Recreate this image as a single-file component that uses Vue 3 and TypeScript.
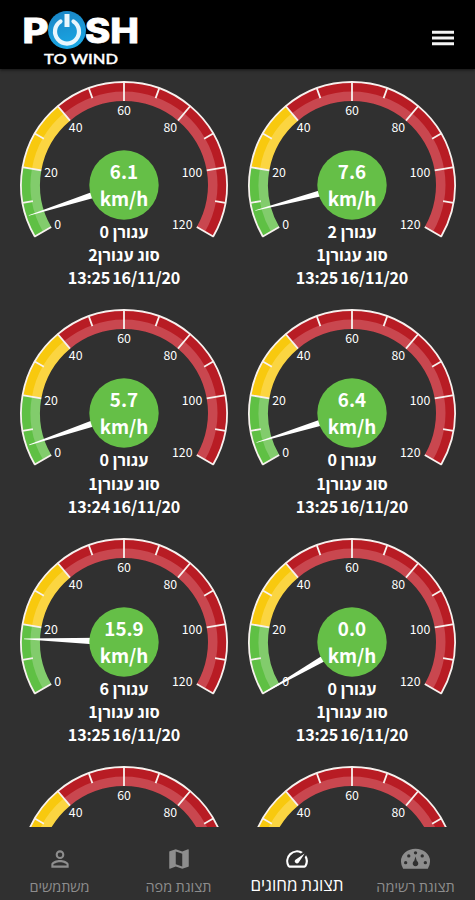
<script setup lang="ts">
interface Reading {
  value: number
  name: string
  kind: string
  time: string
}

const readings: Reading[] = [
  { value: 6.1, name: 'עגורן 0', kind: 'סוג עגורן2', time: '13:25 16/11/20' },
  { value: 7.6, name: 'עגורן 2', kind: 'סוג עגורן1', time: '13:25 16/11/20' },
  { value: 5.7, name: 'עגורן 0', kind: 'סוג עגורן1', time: '13:24 16/11/20' },
  { value: 6.4, name: 'עגורן 0', kind: 'סוג עגורן1', time: '13:25 16/11/20' },
  { value: 15.9, name: 'עגורן 6', kind: 'סוג עגורן1', time: '13:25 16/11/20' },
  { value: 0, name: 'עגורן 0', kind: 'סוג עגורן1', time: '13:25 16/11/20' },
  { value: 6.2, name: 'עגורן 0', kind: 'סוג עגורן1', time: '13:25 16/11/20' },
  { value: 6.2, name: 'עגורן 0', kind: 'סוג עגורן1', time: '13:25 16/11/20' },
]

const CX = 114
const CY = 116
const R = 103

// Dial angle in degrees, 0 pointing up, for a speed between 0 and 120.
const angle = (v: number): number => -120 + v * 2

function point(v: number, r: number): string {
  const a = (angle(v) * Math.PI) / 180
  return `${(CX + r * Math.sin(a)).toFixed(2)} ${(CY - r * Math.cos(a)).toFixed(2)}`
}

function band(from: number, to: number, outer: number, inner: number): string {
  const large = (to - from) * 2 > 180 ? 1 : 0
  return `M${point(from, outer)}A${outer} ${outer} 0 ${large} 1 ${point(to, outer)}L${point(to, inner)}A${inner} ${inner} 0 ${large} 0 ${point(from, inner)}Z`
}

const zones = [
  { from: 0, to: 20, dark: '#5fc044', light: '#82cc6c' },
  { from: 20, to: 40, dark: '#f8c90e', light: '#fbd541' },
  { from: 40, to: 120, dark: '#b81c24', light: '#c9474f' },
]

const outline = `M${point(0, R)}A${R} ${R} 0 1 1 ${point(120, R)}`
const major = [0, 20, 40, 60, 80, 100, 120].map((v) => `M${point(v, R + 0.5)}L${point(v, 84)}`).join('')
const minor = [10, 30, 50, 70, 90, 110].map((v) => `M${point(v, R)}L${point(v, 92.5)}`).join('')

const labels = [
  { t: '0', x: 47.7, y: 159.5 },
  { t: '20', x: 41, y: 107.5 },
  { t: '40', x: 65.7, y: 62.5 },
  { t: '60', x: 114, y: 45.5 },
  { t: '80', x: 160.3, y: 62.5 },
  { t: '100', x: 182, y: 107.5 },
  { t: '120', x: 172.3, y: 159.5 },
]
</script>

<template>
  <div class="app">
    <header class="bar">
      <svg class="logo" viewBox="0 0 120 60" role="img" aria-label="Push to wind">
        <defs>
          <linearGradient id="power" x1="0" y1="0" x2="0.3" y2="1">
            <stop offset="0" stop-color="#1a83c4" />
            <stop offset="1" stop-color="#1aa5e2" />
          </linearGradient>
        </defs>
        <text class="word" x="2.5" y="38.3" textLength="26" lengthAdjust="spacingAndGlyphs">P</text>
        <text class="word" x="65" y="38.3" textLength="54" lengthAdjust="spacingAndGlyphs">SH</text>
        <circle cx="47" cy="25" r="19" fill="url(#power)" />
        <path d="M40.5 16.5A12 12 0 1 0 53.5 16.5" class="ring" />
        <path d="M47 9V22" class="stem" />
        <text class="sub" x="24" y="58.8" textLength="74" lengthAdjust="spacingAndGlyphs">TO WIND</text>
      </svg>
      <svg class="menu" viewBox="0 0 24 24"><path d="M1 6.300h22M1 12h22M1 17.700h22" /></svg>
    </header>

    <main class="grid">
      <section v-for="(r, i) in readings" :key="i" class="cell">
        <svg class="dial" viewBox="0 0 228 151">
          <g v-for="z in zones" :key="z.from">
            <path :d="band(z.from, z.to, R, 84)" :fill="z.light" />
            <path :d="band(z.from, z.to, R, 93.5)" :fill="z.dark" />
          </g>
          <path :d="outline" class="outline" />
          <path :d="major" class="tick" />
          <path :d="minor" class="tick" />
          <text v-for="l in labels" :key="l.t" :x="l.x" :y="l.y" class="num">{{ l.t }}</text>
          <polygon
            :points="`${CX - 4.4},${CY} ${CX - 0.3},${CY - 100} ${CX + 0.3},${CY - 100} ${CX + 4.4},${CY}`"
            :transform="`rotate(${angle(r.value)} ${CX} ${CY})`"
            fill="#fff"
          />
          <circle :cx="CX" :cy="CY" r="34.7" fill="#65bf47" />
          <text :x="CX" y="110.2" class="speed">{{ r.value.toFixed(1) }}</text>
          <text :x="CX" y="136.800" class="speed">km/h</text>
        </svg>
        <div class="caption" dir="rtl">
          <div>{{ r.name }}</div>
          <div>{{ r.kind }}</div>
          <div class="time" dir="ltr">{{ r.time }}</div>
        </div>
      </section>
    </main>

    <nav class="tabs">
      <a class="tab users">
        <svg viewBox="0 0 24 24"><path d="M12 5.9a2.1 2.1 0 1 1 0 4.2 2.1 2.1 0 0 1 0-4.2m0 9c2.97 0 6.1 1.46 6.1 2.1v1.1H5.9V17c0-.64 3.13-2.1 6.1-2.1M12 4a4 4 0 1 0 0 8 4 4 0 0 0 0-8zm0 9c-2.67 0-8 1.34-8 4v3h16v-3c0-2.66-5.33-4-8-4z" /></svg>
        <span>משתמשים</span>
      </a>
      <a class="tab map">
        <svg viewBox="0 0 24 24"><path d="M20.5 3l-.16.03L15 5.1 9 3 3.36 4.9c-.21.07-.36.25-.36.48V20.5c0 .28.22.5.5.5l.16-.03L9 18.9l6 2.1 5.64-1.9c.21-.07.36-.25.36-.48V3.5c0-.28-.22-.5-.5-.5zM15 19l-6-2.11V5l6 2.11V19z" /></svg>
        <span>תצוגת מפה</span>
      </a>
      <a class="tab gauges active">
        <svg viewBox="0 0 24 24"><path d="M20.38 8.57l-1.23 1.85a8 8 0 0 1-.22 7.58H5.07A8 8 0 0 1 15.58 6.85l1.85-1.23A10 10 0 0 0 3.35 19a2 2 0 0 0 1.72 1h13.85a2 2 0 0 0 1.74-1 10 10 0 0 0-.27-10.44zm-9.79 6.84a2 2 0 0 0 2.83 0l5.66-8.49-8.49 5.66a2 2 0 0 0 0 2.83z" /></svg>
        <span>תצוגת מחוגים</span>
      </a>
      <a class="tab list">
        <svg viewBox="0 0 28 24">
          <path d="M2.1 21.500A13.500 13.500 0 0 1 0 14a14 12 0 0 1 28 0 13.500 13.500 0 0 1-2.100 7.500z" />
          <g class="holes">
            <circle cx="4.5" cy="15.5" r="1.6" /><circle cx="7.5" cy="9" r="1.6" /><circle cx="14" cy="6" r="1.6" />
            <circle cx="20.5" cy="9" r="1.6" /><circle cx="23.5" cy="15.5" r="1.6" />
            <path d="M14 9.500l1.300 4.500a2.700 2.700 0 1 1-2.600 0z" />
          </g>
        </svg>
        <span>תצוגת רשימה</span>
      </a>
    </nav>
  </div>
</template>

<style>
body {
  margin: 0;
  background: #303030;
}
</style>

<style scoped>
.app {
  width: 475px;
  height: 900px;
  display: flex;
  flex-direction: column;
  overflow: hidden;
  background: #303030;
  color: #fff;
  font-family: "Noto Sans CJK JP", "Open Sans", "Noto Sans", sans-serif;
}
.bar {
  flex: none;
  height: 69px;
  box-sizing: border-box;
  display: flex;
  justify-content: space-between;
  align-items: flex-start;
  padding: 5px 20px;
  background: #000;
  box-shadow: 0 1px 3px rgba(0, 0, 0, 0.6);
}
.logo {
  width: 120px;
  height: 60px;
  overflow: visible;
}
.word {
  font: 800 33.5px Inter, sans-serif;
  fill: #fff;
  stroke: #fff;
  stroke-width: 0.8;
}
.sub {
  font: 600 14px Lato, sans-serif;
  fill: #fff;
  stroke: #fff;
  stroke-width: 0.3;
}
.ring,
.stem {
  fill: none;
  stroke: #e9f6fd;
  stroke-width: 4.2;
  stroke-linecap: round;
}
.stem {
  stroke-width: 5;
  stroke-linecap: butt;
}
.menu {
  width: 24px;
  height: 24px;
  margin-top: 20.5px;
}
.menu path {
  stroke: #f4f4f4;
  stroke-width: 3;
}
.grid {
  flex: none;
  height: 758px;
  box-sizing: border-box;
  overflow: hidden;
  display: grid;
  grid-template-columns: 228px 228px;
  grid-auto-rows: 228.3px;
  padding-left: 10px;
}
.cell {
  display: flex;
  flex-direction: column;
}
.dial {
  flex: none;
  display: block;
  width: 228px;
  height: 151px;
  overflow: visible;
}
.outline,
.tick {
  fill: none;
  stroke: #f7f1ee;
  stroke-width: 1.8;
}
.num {
  font-size: 12.3px;
  text-anchor: middle;
  fill: #fff;
}
.speed {
  font-size: 18.8px;
  font-weight: 700;
  text-anchor: middle;
  fill: #fff;
}
.caption {
  text-align: center;
  font-size: 16.1px;
  font-weight: 700;
  line-height: 23.2px;
}
.time {
  letter-spacing: -0.2px;
  word-spacing: -1.2px;
}
.tabs {
  flex: 1;
  display: grid;
  grid-template-columns: 119px 119px 118px 119px;
}
.tab {
  display: flex;
  flex-direction: column;
  align-items: center;
  padding-top: 19px;
  color: #8d8d8d;
  font-size: 14.5px;
  line-height: 20px;
}
.tab svg {
  width: 26px;
  height: 26px;
  fill: currentColor;
}
.tab.list svg {
  width: 29px;
}
.holes {
  fill: #303030;
}
.tab span {
  margin-top: 4px;
  white-space: nowrap;
}
.tab.active {
  color: #fff;
  font-size: 17px;
}
.tab.active span {
  margin-top: 2px;
}
</style>
